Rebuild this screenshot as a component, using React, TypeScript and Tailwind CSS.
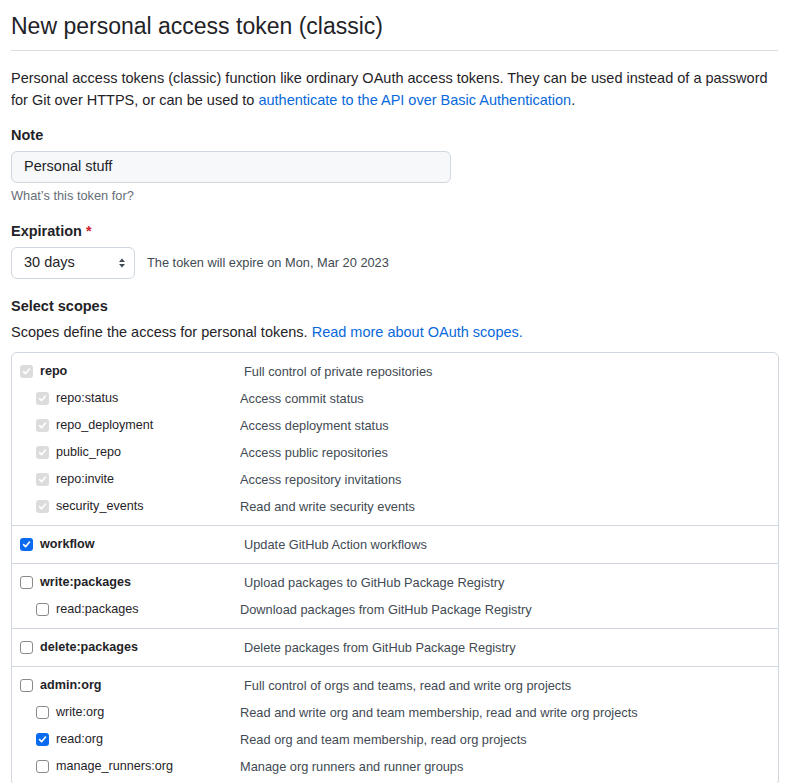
import React from "react";

type Check = "disabled" | "on" | "off";
type Scope = { name: string; desc: string; check: Check };
type Group = { parent: Scope; children: Scope[] };

const groups: Group[] = [
  {
    parent: { name: "repo", desc: "Full control of private repositories", check: "disabled" },
    children: [
      { name: "repo:status", desc: "Access commit status", check: "disabled" },
      { name: "repo_deployment", desc: "Access deployment status", check: "disabled" },
      { name: "public_repo", desc: "Access public repositories", check: "disabled" },
      { name: "repo:invite", desc: "Access repository invitations", check: "disabled" },
      { name: "security_events", desc: "Read and write security events", check: "disabled" },
    ],
  },
  {
    parent: { name: "workflow", desc: "Update GitHub Action workflows", check: "on" },
    children: [],
  },
  {
    parent: { name: "write:packages", desc: "Upload packages to GitHub Package Registry", check: "off" },
    children: [{ name: "read:packages", desc: "Download packages from GitHub Package Registry", check: "off" }],
  },
  {
    parent: { name: "delete:packages", desc: "Delete packages from GitHub Package Registry", check: "off" },
    children: [],
  },
  {
    parent: { name: "admin:org", desc: "Full control of orgs and teams, read and write org projects", check: "off" },
    children: [
      { name: "write:org", desc: "Read and write org and team membership, read and write org projects", check: "off" },
      { name: "read:org", desc: "Read org and team membership, read org projects", check: "on" },
      { name: "manage_runners:org", desc: "Manage org runners and runner groups", check: "off" },
    ],
  },
];

function CheckBox({ state }: { state: Check }) {
  if (state === "off") {
    return <span className="block h-[13px] w-[13px] shrink-0 rounded-[3px] border border-[#8a8a8a] bg-white" />;
  }
  const bg = state === "on" ? "bg-[#0b6bf0]" : "bg-[#dcdcdc]";
  return (
    <span className={`flex h-[13px] w-[13px] shrink-0 items-center justify-center rounded-[3px] ${bg}`}>
      <svg width="9" height="9" viewBox="0 0 10 10" fill="none" aria-hidden="true">
        <path d="M1.8 5.2l2.2 2.3L8.3 2.3" stroke="white" strokeWidth="1.8" strokeLinecap="round" strokeLinejoin="round" />
      </svg>
    </span>
  );
}

function ScopeRow({ scope, child }: { scope: Scope; child?: boolean }) {
  return (
    <div className={`flex h-[27px] items-center ${child ? "pl-[24px]" : "pl-[8px]"}`}>
      <CheckBox state={scope.check} />
      <span
        className={`ml-[7px] shrink-0 text-[12.6px] leading-[27px] text-[#1f2328] ${child ? "w-[184px]" : "w-[204px] font-bold"}`}
      >
        {scope.name}
      </span>
      <span className="text-[12.8px] leading-[27px] text-[#424a53]">{scope.desc}</span>
    </div>
  );
}

export default function App() {
  return (
    <div className="min-h-screen bg-white px-[11px] font-['Liberation_Sans',Arial,sans-serif] text-[#1f2328]">
      {/* Title */}
      <div className="w-[767px] border-b border-[#d8dee4] pb-[9px] pt-[11px]">
        <h1 className="text-[23px] font-normal leading-[30px]">New personal access token (classic)</h1>
      </div>

      <p className="mt-[16px] text-[14.5px] leading-[22px]">
        Personal access tokens (classic) function like ordinary OAuth access tokens. They can be used instead of a password
        for Git over HTTPS, or can be used to{" "}
        <a className="text-[#0969da]">authenticate to the API over Basic Authentication</a>.
      </p>

      {/* Note */}
      <div className="mt-[14px] text-[14.5px] font-bold leading-[21px]">Note</div>
      <div className="mt-[5px] flex h-[32px] w-[440px] items-center rounded-[6px] border border-[#d0d7de] bg-[#f6f8fa] px-[12px] text-[14.5px]">
        Personal stuff
      </div>
      <div className="mt-[4px] text-[12.8px] leading-[18px] text-[#656d76]">What’s this token for?</div>

      {/* Expiration */}
      <div className="mt-[16px] text-[14.5px] font-bold leading-[21px]">
        Expiration <span className="text-[#cf222e]">*</span>
      </div>
      <div className="mt-[5px] flex items-center">
        <div className="flex h-[32px] w-[124px] items-center justify-between rounded-[6px] border border-[#d0d7de] bg-white pl-[12px] pr-[8px] text-[14.5px]">
          <span>30 days</span>
          <svg width="8" height="12" viewBox="0 0 8 12" aria-hidden="true">
            <path d="M4 1.5L7 5H1z" fill="#424a53" />
            <path d="M4 10.5L1 7h6z" fill="#424a53" />
          </svg>
        </div>
        <span className="ml-[12px] text-[12.8px] text-[#424a53]">The token will expire on Mon, Mar 20 2023</span>
      </div>

      {/* Scopes */}
      <div className="mt-[17px] text-[14.5px] font-bold leading-[21px]">Select scopes</div>
      <p className="mt-[5px] text-[14.5px] leading-[21px]">
        Scopes define the access for personal tokens. <a className="text-[#0969da]">Read more about OAuth scopes.</a>
      </p>

      <div className="mt-[9px] w-[768px] rounded-[6px] border border-[#d0d7de]">
        {groups.map((g, i) => (
          <div key={g.parent.name} className={`py-[5px] ${i > 0 ? "border-t border-[#d0d7de]" : ""}`}>
            <ScopeRow scope={g.parent} />
            {g.children.map((c) => (
              <ScopeRow key={c.name} scope={c} child />
            ))}
          </div>
        ))}
      </div>
    </div>
  );
}
